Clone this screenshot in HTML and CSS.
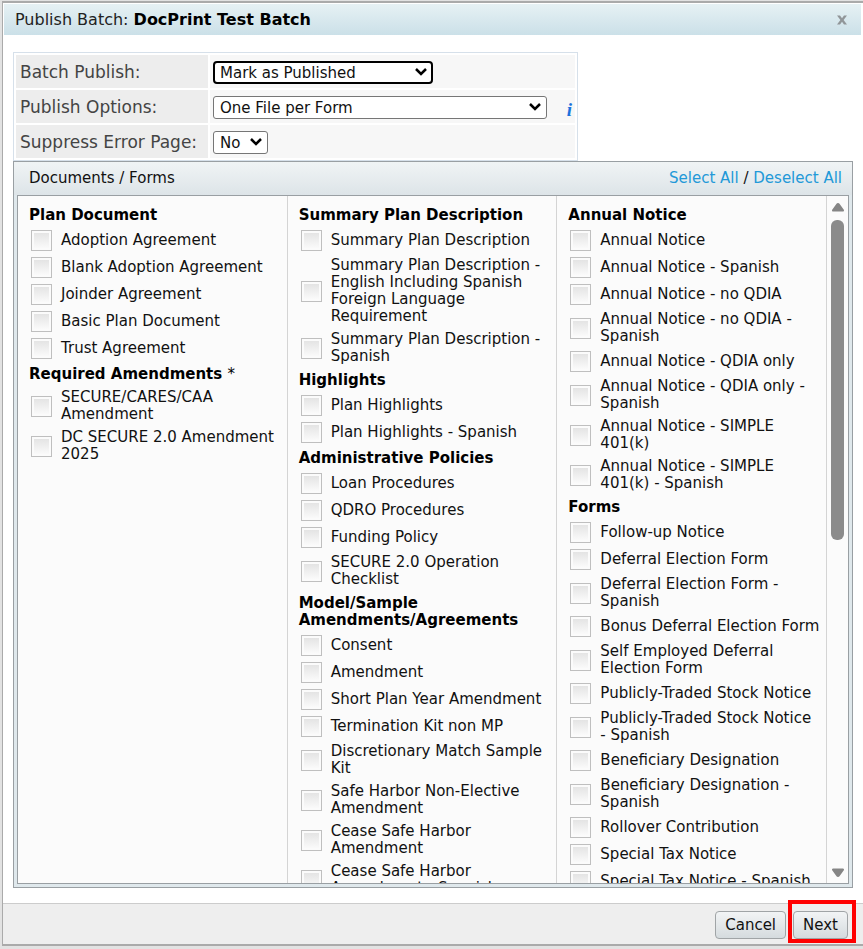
FILE: index.html
```
<!DOCTYPE html>
<html lang="en">
<head>
<meta charset="utf-8">
<title>Publish Batch</title>
<link rel="stylesheet" href="styles.css">
</head>
<body>
<main class="dialog">
  <header class="titlebar">
    <h1>Publish Batch: <b>DocPrint Test Batch</b></h1>
    <button class="close" type="button" aria-label="Close"><svg width="12" height="12" viewBox="0 0 12 12"><path d="M1 1.5h3l2 2.7 2-2.7h3L7.6 6l3.4 4.5H8L6 7.8l-2 2.7H1L4.4 6z" fill="#919699"/></svg></button>
  </header>
  <div class="content">
    <table class="options">
      <tr><th><label for="publish">Batch Publish:</label></th><td><span class="pick w-mid"><select id="publish" class="focused"><option>Mark as Published</option></select><svg class="chev" width="12" height="8" viewBox="0 0 12 8"><path d="M1 1l5 5 5-5" /></svg></span></td></tr>
      <tr><th><label for="opts">Publish Options:</label></th><td><div class="line"><span class="pick w-wide"><select id="opts"><option>One File per Form</option></select><svg class="chev" width="12" height="8" viewBox="0 0 12 8"><path d="M1 1l5 5 5-5" /></svg></span><i class="info">i</i></div></td></tr>
      <tr><th><label for="suppress">Suppress Error Page:</label></th><td><span class="pick w-small"><select id="suppress"><option>No</option></select><svg class="chev" width="12" height="8" viewBox="0 0 12 8"><path d="M1 1l5 5 5-5" /></svg></span></td></tr>
    </table>
    <section class="panel">
      <div class="panel-head"><h2>Documents / Forms</h2><p><a href="#">Select All</a> / <a href="#">Deselect All</a></p></div>
      <div class="list">
        <div class="column">
          <h3>Plan Document</h3>
          <label><input type="checkbox"><span>Adoption Agreement</span></label>
          <label><input type="checkbox"><span>Blank Adoption Agreement</span></label>
          <label><input type="checkbox"><span>Joinder Agreement</span></label>
          <label><input type="checkbox"><span>Basic Plan Document</span></label>
          <label><input type="checkbox"><span>Trust Agreement</span></label>
          <h3>Required Amendments <span class="star">*</span></h3>
          <label><input type="checkbox"><span>SECURE/CARES/CAA Amendment</span></label>
          <label><input type="checkbox"><span>DC SECURE 2.0 Amendment 2025</span></label>
        </div>
        <div class="column">
          <h3>Summary Plan Description</h3>
          <label><input type="checkbox"><span>Summary Plan Description</span></label>
          <label><input type="checkbox"><span>Summary Plan Description - English Including Spanish Foreign Language Requirement</span></label>
          <label><input type="checkbox"><span>Summary Plan Description - Spanish</span></label>
          <h3>Highlights</h3>
          <label><input type="checkbox"><span>Plan Highlights</span></label>
          <label><input type="checkbox"><span>Plan Highlights - Spanish</span></label>
          <h3>Administrative Policies</h3>
          <label><input type="checkbox"><span>Loan Procedures</span></label>
          <label><input type="checkbox"><span>QDRO Procedures</span></label>
          <label><input type="checkbox"><span>Funding Policy</span></label>
          <label><input type="checkbox"><span>SECURE 2.0 Operation Checklist</span></label>
          <h3>Model/Sample Amendments/Agreements</h3>
          <label><input type="checkbox"><span>Consent</span></label>
          <label><input type="checkbox"><span>Amendment</span></label>
          <label><input type="checkbox"><span>Short Plan Year Amendment</span></label>
          <label><input type="checkbox"><span>Termination Kit non MP</span></label>
          <label><input type="checkbox"><span>Discretionary Match Sample Kit</span></label>
          <label><input type="checkbox"><span>Safe Harbor Non-Elective Amendment</span></label>
          <label><input type="checkbox"><span>Cease Safe Harbor Amendment</span></label>
          <label><input type="checkbox"><span>Cease Safe Harbor Amendment - Spanish</span></label>
        </div>
        <div class="column">
          <h3>Annual Notice</h3>
          <label><input type="checkbox"><span>Annual Notice</span></label>
          <label><input type="checkbox"><span>Annual Notice - Spanish</span></label>
          <label><input type="checkbox"><span>Annual Notice - no QDIA</span></label>
          <label><input type="checkbox"><span>Annual Notice - no QDIA - Spanish</span></label>
          <label><input type="checkbox"><span>Annual Notice - QDIA only</span></label>
          <label><input type="checkbox"><span>Annual Notice - QDIA only - Spanish</span></label>
          <label><input type="checkbox"><span>Annual Notice - SIMPLE 401(k)</span></label>
          <label><input type="checkbox"><span>Annual Notice - SIMPLE 401(k) - Spanish</span></label>
          <h3>Forms</h3>
          <label><input type="checkbox"><span>Follow-up Notice</span></label>
          <label><input type="checkbox"><span>Deferral Election Form</span></label>
          <label><input type="checkbox"><span>Deferral Election Form - Spanish</span></label>
          <label><input type="checkbox"><span>Bonus Deferral Election Form</span></label>
          <label><input type="checkbox"><span>Self Employed Deferral Election Form</span></label>
          <label><input type="checkbox"><span>Publicly-Traded Stock Notice</span></label>
          <label><input type="checkbox"><span>Publicly-Traded Stock Notice <span class="together">- Spanish</span></span></label>
          <label><input type="checkbox"><span>Beneficiary Designation</span></label>
          <label><input type="checkbox"><span>Beneficiary Designation - Spanish</span></label>
          <label><input type="checkbox"><span>Rollover Contribution</span></label>
          <label><input type="checkbox"><span>Special Tax Notice</span></label>
          <label><input type="checkbox"><span>Special Tax Notice - Spanish</span></label>
        </div>
        <div class="rail">
          <svg width="14" height="10" viewBox="0 0 14 10"><path d="M7 1q1 0 1.500.8L13 8q.3 1.500-1 1.500H2Q.7 9.500 1 8l4.500-6.200Q6 1 7 1z"/></svg>
          <div class="track"><div class="thumb"></div></div>
          <svg width="14" height="10" viewBox="0 0 14 10"><path d="M7 9q1 0 1.500-.8L13 2q.3-1.500-1-1.500H2Q.7.5 1 2l4.500 6.200Q6 9 7 9z"/></svg>
        </div>
      </div>
    </section>
  </div>
  <footer class="footer">
    <button class="btn" type="button">Cancel</button>
    <span class="callout"><button class="btn" type="button">Next</button></span>
  </footer>
</main>
</body>
</html>
```
FILE: styles.css
```
* { box-sizing: border-box; }
body {
  margin: 0;
  height: 100vh;
  padding: 1px 0 3px 2px;
  display: flex;
  background: #e2e2e2;
  color: #111;
  font: 15px/17px "DejaVu Sans", Verdana, sans-serif;
}
h1, h2, h3, p { margin: 0; font-size: inherit; font-weight: normal; }
.dialog {
  flex: 1;
  min-width: 0;
  display: flex;
  flex-direction: column;
  background: #fff;
  border: 1px solid #aaa;
  border-width: 2px 0 2px 1px;
}
.titlebar {
  display: flex;
  align-items: center;
  justify-content: space-between;
  height: 31px;
  margin: 1px 2px 0 1px;
  padding: 0 13px 0 11px;
  background: linear-gradient(#e6f1f4, #cbe0e8);
}
.titlebar h1 { font-size: 16px; color: #222; }
.titlebar b { color: #000; }
.close { display: flex; padding: 0; border: 0; background: none; }
.content {
  flex: 1;
  min-height: 0;
  display: flex;
  flex-direction: column;
  align-items: flex-start;
  padding: 17px 10px 15px 10px;
}
.options {
  width: 565px;
  border: 1px solid #d6e0ea;
  border-spacing: 2px;
}
.options th {
  width: 192px;
  height: 33px;
  padding: 2px 4px 0;
  background: #ededed;
  color: #444;
  font-size: 17px;
  font-weight: normal;
  text-align: left;
  white-space: nowrap;
}
.options td { padding: 2px 3px 0; background: #f7f7f7; }
.line { display: flex; align-items: center; justify-content: space-between; }
.pick { position: relative; display: block; }
.w-mid { width: 220px; }
.w-wide { width: 334px; }
.w-small { width: 55px; }
.pick select {
  display: block;
  width: 100%;
  height: 23px;
  padding: 1px 6px 0;
  border: 1px solid #767676;
  border-radius: 3px;
  appearance: none;
  background: #fff;
  color: #111;
  font: inherit;
}
.pick .focused { border: 2px solid #000; border-radius: 4px; padding: 1px 5px 0; }
.chev { position: absolute; right: 6px; top: 7px; fill: none; stroke: #000; stroke-width: 2.5; pointer-events: none; }
.info { padding-top: 4px; color: #1c72dc; font: italic bold 19px/19px "Liberation Serif", serif; }
.panel {
  align-self: stretch;
  flex: 1;
  min-height: 0;
  display: flex;
  flex-direction: column;
  padding: 0 3px 3px;
  border: 1px solid #999fa3;
  background: #dfe8ec;
}
.panel-head {
  display: flex;
  align-items: center;
  justify-content: space-between;
  height: 33px;
  margin: 0 -3px;
  padding: 0 10px 0 15px;
  background: linear-gradient(#f0f4f5, #dde4e8);
}
.panel-head a { color: #2299d8; text-decoration: none; }
.list {
  flex: 1;
  min-height: 0;
  display: flex;
  overflow: hidden;
  border: 1px solid #999fa3;
  background: #fbfbfb;
}
.column { flex: 1; min-width: 0; padding: 7px 4px 0 11px; border-right: 1px solid #d4d4d4; }
.column h3 { padding: 4px 0 3px; color: #000; font-weight: bold; }
.star { font-weight: normal; }
.together { white-space: nowrap; }
.column label { display: flex; align-items: center; gap: 9px; padding: 3px 0 3px 2px; }
.column input {
  flex: none;
  width: 21px;
  height: 21px;
  margin: 0;
  appearance: none;
  border: 1px solid #bfbfbf;
  background: linear-gradient(#e4e4e4, #fafafa) content-box #fff;
  padding: 2px;
}
.rail { width: 21px; display: flex; flex-direction: column; align-items: center; padding: 6px 0 5px; fill: #858585; }
.track { flex: 1; align-self: stretch; padding: 8px 4px; }
.thumb { height: 50%; border-radius: 6px; background: #8b8b8b; }
.footer {
  flex: none;
  display: flex;
  align-items: center;
  justify-content: flex-end;
  gap: 7px;
  height: 41px;
  padding: 2px 15px 0 0;
  border-top: 1px solid #ccc;
  background: #eee;
}
.btn {
  display: block;
  height: 28px;
  padding: 0 9px;
  border: 1px solid #a0a4a6;
  border-radius: 4px;
  background: linear-gradient(#f2f4f5, #d5dbde);
  color: #111;
  font: inherit;
}
.callout { position: relative; }
.callout::after {
  content: "";
  position: absolute;
  inset: -11px -8px -4px -5px;
  border: 4px solid #f00;
  pointer-events: none;
}
```
